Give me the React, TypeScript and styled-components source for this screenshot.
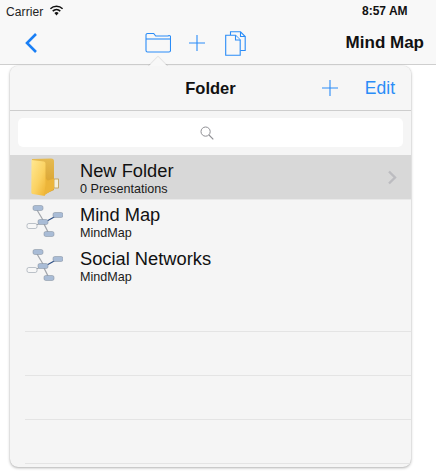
import React from "react";
import styled, { createGlobalStyle } from "styled-components";

const Global = createGlobalStyle`
  html, body { margin: 0; padding: 0; background: #fff; }
  body { font-family: "Liberation Sans", Arial, sans-serif; color: #000; overflow: hidden; }
  #root { width: 436px; height: 473px; overflow: hidden; }
`;

const Page = styled.div`
  width: 436px;
  height: 473px;
  position: relative;
  background: #fff;
`;

const NavBar = styled.header`
  height: 65px;
  box-sizing: border-box;
  background: #f8f8f8;
  border-bottom: 1px solid #cfcfcf;
`;

const StatusBar = styled.div`
  height: 22px;
  box-sizing: border-box;
  display: flex;
  align-items: center;
  padding: 2px 0 0 6px;
  font-size: 12px;
  color: #222;
`;

const Carrier = styled.div`
  display: flex;
  align-items: center;
  gap: 6px;
  letter-spacing: 0.1px;
`;

const WifiBox = styled.span`
  display: block;
  margin-top: -3px;
`;

const Time = styled.div`
  position: absolute;
  left: 362px;
  top: 4px;
  font-size: 12px;
  font-weight: 700;
  line-height: 14px;
  color: #111;
`;

const Tools = styled.div`
  height: 42px;
  display: flex;
  align-items: center;
  padding: 0 12px 0 24px;
`;

const BackIcon = styled.svg`
  width: 14px;
  height: 22px;
  display: block;
`;

const Center = styled.div`
  display: flex;
  align-items: center;
  margin-left: 107px;
`;

const CenterPlus = styled.div`
  margin: 0 20px 0 18px;
`;

const NavTitle = styled.div`
  margin-left: auto;
  font-size: 17px;
  font-weight: 700;
  color: #111;
`;

const Popover = styled.section`
  position: relative;
  margin: 1px 0 0 10px;
  width: 401px;
  height: 401px;
  box-sizing: border-box;
  background: #f5f5f5;
  border-radius: 8px;
  box-shadow: 0 1px 3px rgba(0, 0, 0, 0.3), 0 0 1px rgba(0, 0, 0, 0.18);
`;

const Arrow = styled.div`
  position: absolute;
  left: 138px;
  top: -9px;
  width: 20px;
  height: 20px;
  background: #f8f8f8;
  transform: rotate(45deg) scale(0.72);
  box-shadow: -1px -1px 1px rgba(0, 0, 0, 0.1);
`;

const PopHeader = styled.div`
  position: relative;
  height: 45px;
  box-sizing: border-box;
  display: flex;
  align-items: center;
  justify-content: flex-end;
  border-bottom: 1px solid #cdcdcd;
  padding: 0 16px 0 0;
  background: #f6f6f6;
  border-radius: 8px 8px 0 0;
`;

const PopTitle = styled.div`
  position: absolute;
  left: 0;
  right: 0;
  text-align: center;
  font-size: 16.5px;
  font-weight: 700;
  color: #111;
`;

const EditLink = styled.span`
  margin-left: 27px;
  font-size: 17.5px;
  color: #2a8cf7;
`;

const SearchWrap = styled.div`
  height: 44px;
  box-sizing: border-box;
  padding: 7px 8px 8px 8px;
`;

const SearchField = styled.div`
  height: 29px;
  background: #fff;
  border-radius: 5px;
  display: flex;
  align-items: center;
  justify-content: center;
  padding-right: 8px;
  box-sizing: border-box;
`;

const Row = styled.div<{ $selected?: boolean }>`
  position: relative;
  height: ${(p) => (p.$selected ? "45px" : "44px")};
  box-sizing: border-box;
  display: flex;
  align-items: center;
  background: ${(p) => (p.$selected ? "#d8d8d8" : "transparent")};
  border-bottom: 1px solid ${(p) => (p.$selected ? "#e9e9e9" : "transparent")};
`;

const IconCell = styled.div<{ $folder?: boolean }>`
  width: 70px;
  flex: none;
  display: flex;
  justify-content: flex-start;
  padding-left: ${(p) => (p.$folder ? "21px" : "15px")};
  box-sizing: border-box;
  filter: blur(0.3px);
`;

const RowText = styled.div<{ $selected?: boolean }>`
  display: flex;
  flex-direction: column;
  flex: 1;
  padding-top: ${(p) => (p.$selected ? "3px" : "1px")};
`;

const RowTitle = styled.div`
  font-size: 18.3px;
  line-height: 21px;
  color: #111;
`;

const RowSub = styled.div`
  font-size: 12.6px;
  line-height: 15px;
  margin-top: 1px;
  color: #1a1a1a;
`;

const Chevron = styled.svg`
  width: 10px;
  height: 15px;
  margin-right: 14px;
`;

const EmptyRow = styled.div`
  height: 44px;
  box-sizing: border-box;
  margin-left: 15px;
  border-bottom: 1px solid #e4e4e4;
`;

const Blue = "#2a8cf7";

const PlusIcon = ({ size = 16 }: { size?: number }) => (
  <svg width={size} height={size} viewBox="0 0 16 16" style={{ display: "block" }}>
    <path d="M8 0v16M0 8h16" stroke={Blue} strokeWidth="1.1" fill="none" />
  </svg>
);

const FolderOutline = () => (
  <svg width="26" height="22" viewBox="0 0 26 22" style={{ display: "block" }}>
    <path
      d="M1 18.5V3a1.5 1.5 0 0 1 1.5-1.5h6.2l2 2.5h12.3A1.5 1.5 0 0 1 25.5 5.5v13a1.5 1.5 0 0 1-1.5 1.5H2.5A1.5 1.5 0 0 1 1 18.5z"
      fill="none"
      stroke={Blue}
      strokeWidth="1.1"
    />
    <path d="M1 7h24.5" stroke={Blue} strokeWidth="1.1" fill="none" />
  </svg>
);

const CopyIcon = () => (
  <svg width="21" height="25" viewBox="0 0 21 25" style={{ display: "block" }}>
    <path d="M5.5 4V0.8h10l4.7 4.7V19.5h-5" fill="none" stroke={Blue} strokeWidth="1.1" />
    <path d="M15.5 1v4.5h4.7" fill="none" stroke={Blue} strokeWidth="1.1" />
    <path d="M0.7 4.3h9.8l4.7 4.7V24.3H0.7z" fill="#f8f8f8" stroke={Blue} strokeWidth="1.1" />
    <path d="M10.5 4.5V9H15.2" fill="#f8f8f8" stroke={Blue} strokeWidth="1.1" />
  </svg>
);

const Wifi = () => (
  <svg width="15" height="11" viewBox="0 0 15 11" style={{ display: "block" }}>
    <path d="M7.5 10.5 L5.4 8 A3 3 0 0 1 9.6 8 Z" fill="#111" />
    <path d="M3.7 6.1 A5.6 5.6 0 0 1 11.3 6.1" stroke="#111" strokeWidth="1.5" fill="none" />
    <path d="M1.4 3.7 A8.8 8.8 0 0 1 13.6 3.7" stroke="#111" strokeWidth="1.5" fill="none" />
  </svg>
);

const SearchIcon = () => (
  <svg width="14" height="14" viewBox="0 0 14 14" style={{ display: "block" }}>
    <circle cx="5.6" cy="5.6" r="4.6" fill="none" stroke="#8e8e93" strokeWidth="1" />
    <path d="M9 9l4.3 4.3" stroke="#8e8e93" strokeWidth="1.1" />
  </svg>
);

const FolderImage = () => (
  <svg width="29" height="38" viewBox="0 0 29 38" style={{ display: "block" }}>
    <defs>
      <linearGradient id="fBack" x1="0" y1="0" x2="0" y2="1">
        <stop offset="0" stopColor="#e6bb52" />
        <stop offset="1" stopColor="#d59b26" />
      </linearGradient>
      <linearGradient id="fFront" x1="0" y1="0" x2="1" y2="1">
        <stop offset="0" stopColor="#ffe892" />
        <stop offset="0.55" stopColor="#fbd262" />
        <stop offset="1" stopColor="#eeb12f" />
      </linearGradient>
    </defs>
    <path d="M1 1 L20 0.5 Q23 0.5 23 3 V32 L14 36 L1 35z" fill="url(#fBack)" />
    <rect x="23" y="21" width="4.5" height="9" fill="#f4f0dc" stroke="#b78f3a" strokeWidth="0.7" />
    <path
      d="M0.5 2 L13 3.5 Q14.5 3.8 14.5 5.5 V18 L15 23 V28 L14 37.5 Q13.5 38 12.5 37.7 L1.5 36 Q0.3 35.5 0.3 34.5z"
      fill="url(#fFront)"
    />
    <path d="M14.5 5.5 V18 Q15 22 17 22.5 L23 20.5 V31 L13 37.5 L14.5 28z" fill="#ecb53a" />
  </svg>
);

const MindNode = ({ x, y, w = 10, fill = "#a9bcd6" }: { x: number; y: number; w?: number; fill?: string }) => (
  <rect x={x} y={y} width={w} height="5" rx="1.8" fill={fill} stroke="#7f8b99" strokeWidth="0.5" />
);

const MindMapImage = () => (
  <svg width="38" height="34" viewBox="0 0 38 34" style={{ display: "block" }}>
    <path d="M12 5 L18 15" stroke="#a0a4aa" strokeWidth="1.2" />
    <path d="M17 18 L8 21" stroke="#a0a4aa" strokeWidth="1" />
    <path d="M19 19 L23 27" stroke="#a0a4aa" strokeWidth="1.2" />
    <path d="M22 16 L31 11" stroke="#2d4f86" strokeWidth="1.2" />
    <MindNode x={8} y={0.5} />
    <MindNode x={28} y={7.5} />
    <MindNode x={13} y={14.5} />
    <MindNode x={2} y={18.5} fill="#f7f7f7" />
    <MindNode x={19} y={26.5} />
  </svg>
);

const rows = [
  { title: "New Folder", sub: "0 Presentations", selected: true, folder: true },
  { title: "Mind Map", sub: "MindMap" },
  { title: "Social Networks", sub: "MindMap" },
];

export default function App() {
  return (
    <Page>
      <Global />
      <NavBar>
        <StatusBar>
          <Carrier>
            Carrier
            <WifiBox>
              <Wifi />
            </WifiBox>
          </Carrier>
        </StatusBar>
        <Time>8:57 AM</Time>
        <Tools>
          <BackIcon viewBox="0 0 14 22">
            <path d="M12 2 L3 11 L12 20" fill="none" stroke="#1a7ff5" strokeWidth="2.6" />
          </BackIcon>
          <Center>
            <FolderOutline />
            <CenterPlus>
              <PlusIcon />
            </CenterPlus>
            <CopyIcon />
          </Center>
          <NavTitle>Mind Map</NavTitle>
        </Tools>
      </NavBar>
      <Popover>
        <Arrow />
        <PopHeader>
          <PopTitle>Folder</PopTitle>
          <PlusIcon />
          <EditLink>Edit</EditLink>
        </PopHeader>
        <SearchWrap>
          <SearchField>
            <SearchIcon />
          </SearchField>
        </SearchWrap>
        {rows.map((r) => (
          <Row key={r.title} $selected={r.selected}>
            <IconCell $folder={r.folder}>{r.folder ? <FolderImage /> : <MindMapImage />}</IconCell>
            <RowText $selected={r.selected}>
              <RowTitle>{r.title}</RowTitle>
              <RowSub>{r.sub}</RowSub>
            </RowText>
            {r.selected && (
              <Chevron viewBox="0 0 10 15">
                <path d="M2 1.5 L8 7.5 L2 13.5" fill="none" stroke="#bcbcc0" strokeWidth="2.4" />
              </Chevron>
            )}
          </Row>
        ))}
        <EmptyRow />
        <EmptyRow />
        <EmptyRow />
        <EmptyRow />
      </Popover>
    </Page>
  );
}
